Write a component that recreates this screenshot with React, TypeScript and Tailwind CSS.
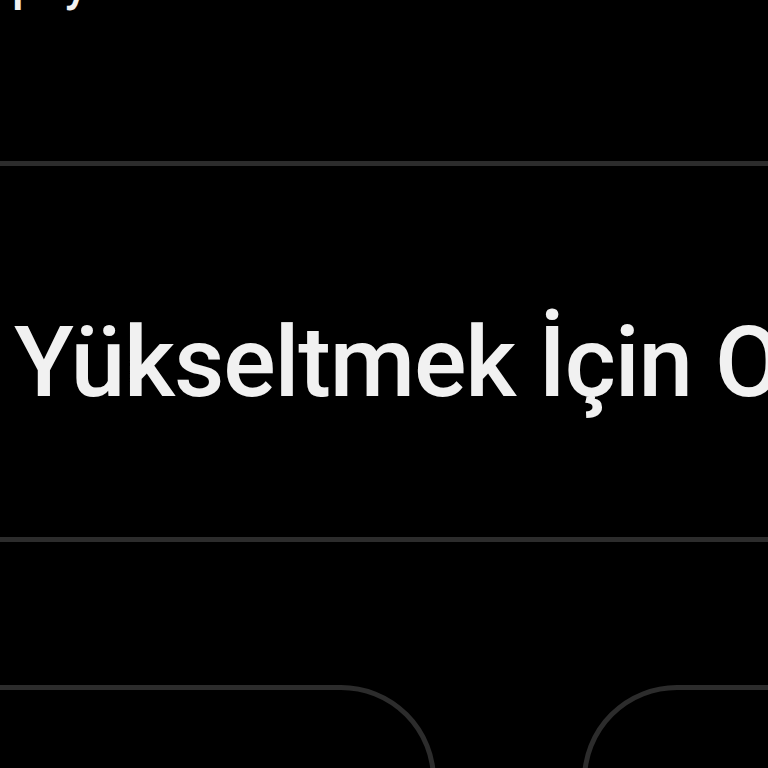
export default function App() {
  return (
    <div className="w-[768px] h-[768px] overflow-hidden bg-black text-[#f1f1f1]" style={{ fontFamily: 'Roboto, "Noto Sans", sans-serif' }}>
      <div className="h-[161px] overflow-hidden pl-[12px]">
        <div className="text-[48px] leading-[48px] font-medium whitespace-nowrap mt-[-40px]">paylar</div>
      </div>
      <div className="h-[5px] bg-[#2c2c2c]" />
      <div className="h-[371px] overflow-hidden pl-[14px] pt-[148px]">
        <div className="text-[98px] leading-[98px] font-medium tracking-[-1.2px] whitespace-nowrap">Yükseltmek İçin Oturum Açın</div>
      </div>
      <div className="h-[5px] bg-[#2c2c2c]" />
      <div className="mt-[143px] flex gap-[146px] ml-[-200px]">
        <div className="w-[636px] h-[300px] shrink-0 rounded-[95px] border-[5px] border-[#2c2c2c]" />
        <div className="w-[636px] h-[300px] shrink-0 rounded-[95px] border-[5px] border-[#2c2c2c]" />
      </div>
    </div>
  );
}
